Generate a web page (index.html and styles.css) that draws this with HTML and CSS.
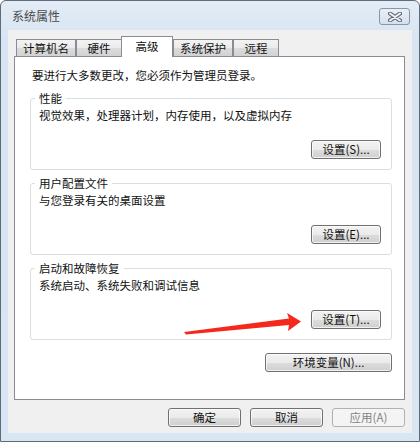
FILE: index.html
```html
<!DOCTYPE html>
<html lang="zh-CN">

<head>
    <meta charset="UTF-8">
    <title>系统属性</title>
    <link rel="stylesheet" href="styles.css">
</head>

<body>
    <div class="window">
        <div class="titlebar">
            <span class="title">系统属性</span>
            <button class="close" type="button">
                <svg width="14" height="10" viewBox="0 0 14 10">
                    <path d="M2 1.5 L12 8.5 M12 1.5 L2 8.5" stroke="#5d6877" stroke-width="4" stroke-linecap="round" fill="none"/>
                    <path d="M2 1.5 L12 8.5 M12 1.5 L2 8.5" stroke="#f2f5f8" stroke-width="2" stroke-linecap="round" fill="none"/>
                </svg>
            </button>
        </div>

        <div class="content">
            <div class="tabs">
                <div class="tab">计算机名</div>
                <div class="tab">硬件</div>
                <div class="tab active">高级</div>
                <div class="tab">系统保护</div>
                <div class="tab">远程</div>
            </div>

            <div class="panel">
                <p class="intro">要进行大多数更改，您必须作为管理员登录。</p>

                <fieldset class="group">
                    <legend>性能</legend>
                    <p>视觉效果，处理器计划，内存使用，以及虚拟内存</p>
                    <div class="row"><button class="btn" type="button">设置(S)...</button></div>
                </fieldset>

                <fieldset class="group">
                    <legend>用户配置文件</legend>
                    <p>与您登录有关的桌面设置</p>
                    <div class="row"><button class="btn" type="button">设置(E)...</button></div>
                </fieldset>

                <fieldset class="group">
                    <legend>启动和故障恢复</legend>
                    <p>系统启动、系统失败和调试信息</p>
                    <div class="row"><button class="btn" type="button">设置(T)...</button></div>
                </fieldset>

                <div class="row env">
                    <button class="btn wide" type="button">环境变量(N)...</button>
                </div>
            </div>

            <div class="actions">
                <button class="btn action" type="button">确定</button>
                <button class="btn action" type="button">取消</button>
                <button class="btn action" type="button" disabled>应用(A)</button>
            </div>
        </div>

        <!-- red annotation arrow drawn over the dialog -->
        <svg class="arrow" width="420" height="442" viewBox="0 0 420 442">
            <polygon points="184,332 289,318.5 287,313 301,321.5 288,331 289,325 186,334.5" fill="#f5281c"/>
        </svg>
    </div>
</body>

</html>
```

FILE: styles.css
```css
body {
    margin: 0;
    font-family: "Noto Sans CJK SC", "Liberation Sans", sans-serif;
    font-size: 11.5px;
    color: #111;
}

.window {
    position: relative;
    box-sizing: border-box;
    width: 420px;
    height: 442px;
    padding: 0 7px 7px 7px;
    border: 1px solid #5e6b79;
    border-radius: 6px 6px 0 0;
    background: linear-gradient(#e3ecf6, #d7e4f2 40px, #d8e5f3);
}

.titlebar {
    display: flex;
    align-items: center;
    justify-content: space-between;
    height: 29px;
}

.title {
    padding-left: 4px;
    font-size: 12px;
    color: #4a4a4a;
}

.close {
    display: flex;
    align-items: center;
    justify-content: center;
    box-sizing: border-box;
    width: 31px;
    height: 17px;
    margin: 2px 2px 0 0;
    padding: 0;
    border: 1px solid #8796a8;
    border-radius: 3px;
    background: linear-gradient(#e9eff6, #d6e0ec);
}

.content {
    display: flex;
    flex-direction: column;
    height: 403px;
    box-sizing: border-box;
    padding: 6px 7px 6px 6px;
    background: #f0f0f0;
}

.tabs {
    display: flex;
    align-items: flex-end;
    height: 20px;
    padding-left: 2px;
}

.tab {
    box-sizing: border-box;
    height: 17px;
    min-width: 46px;
    padding: 0 6px;
    border: 1px solid #898c95;
    border-bottom: none;
    border-left-width: 1px;
    background: linear-gradient(#f3f3f3, #ebebeb 50%, #dcdcdc 51%, #d2d2d2);
    line-height: 16px;
    text-align: center;
}

.tab.active {
    position: relative;
    z-index: 1;
    height: 21px;
    min-width: 52px;
    margin: 0 0 -1px -1px;
    background: #fff;
    line-height: 19px;
}

.panel {
    box-sizing: border-box;
    height: 344px;
    padding: 11px 12px 0 15px;
    border: 1px solid #898c95;
    background: #fff;
}

.panel p {
    margin: 0;
    line-height: 14px;
}

.panel .intro {
    margin: 0 0 9px 2px;
}

.group {
    margin: 0 0 6px 0;
    padding: 3px 10px 10px 4px;
    border: 1px solid #d5dfe5;
    border-radius: 3px;
}

.group legend {
    padding: 0 4px;
    line-height: 14px;
}

.group p {
    padding-left: 4px;
}

.row {
    display: flex;
    justify-content: flex-end;
}

.group .row {
    margin-top: 18px;
}

.btn {
    box-sizing: border-box;
    width: 70px;
    height: 19px;
    padding: 0;
    border: 1px solid #707070;
    border-radius: 3px;
    background: linear-gradient(#f2f2f2, #ebebeb 50%, #dddddd 51%, #cfcfcf);
    font: inherit;
    color: #111;
    line-height: 17px;
    box-shadow: inset 0 0 0 1px rgba(255, 255, 255, 0.7);
}

.btn.wide {
    width: 127px;
}

.env {
    margin-top: 13px;
}

.actions {
    display: flex;
    justify-content: flex-end;
    gap: 9px;
    margin-top: 8px;
}

.btn.action {
    width: 73px;
}

.btn:disabled {
    border-color: #adb2b5;
    background: #f4f4f4;
    color: #838383;
    box-shadow: none;
}

.arrow {
    position: absolute;
    left: -1px;
    top: -1px;
    pointer-events: none;
}
```
